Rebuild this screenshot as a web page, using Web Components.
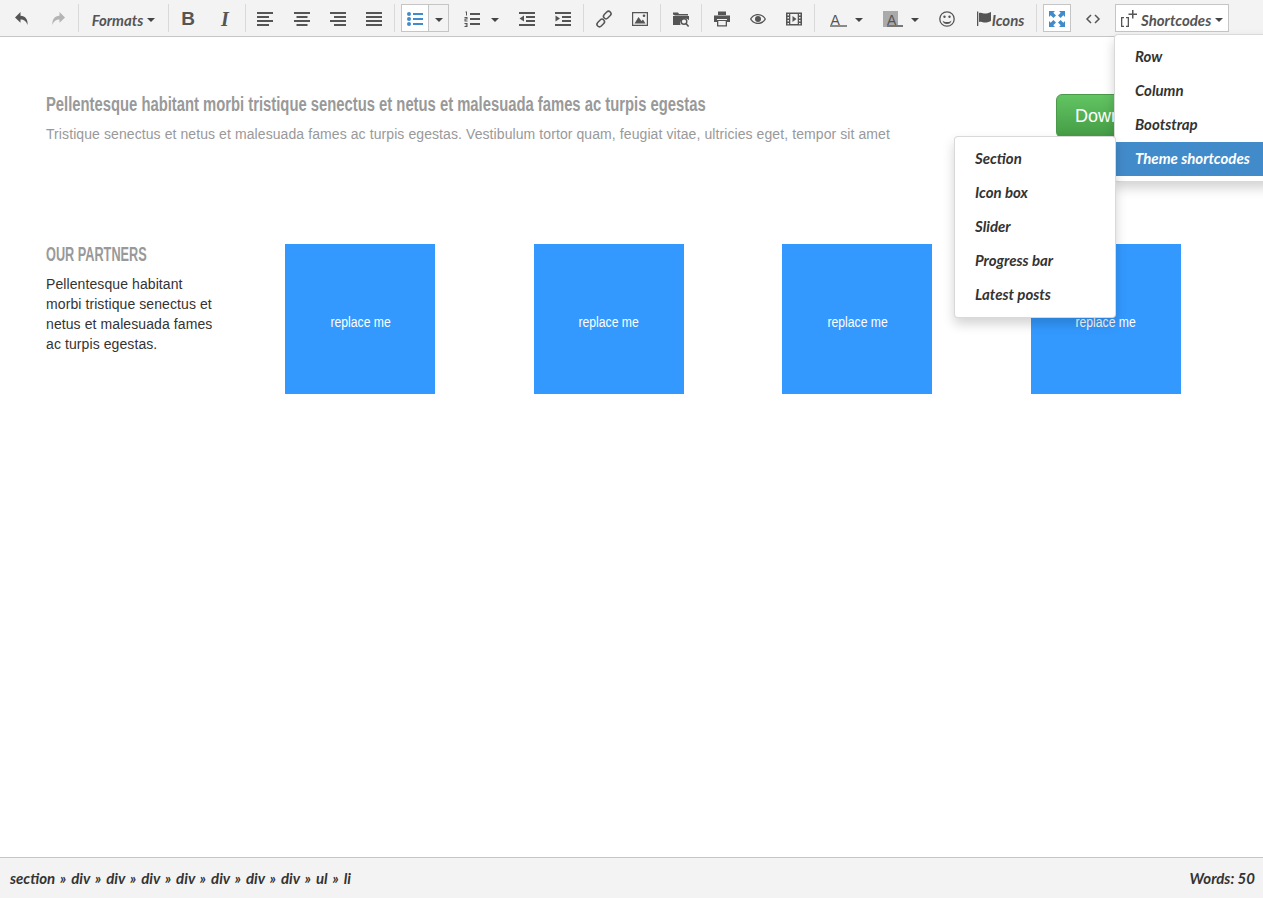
<!DOCTYPE html>
<html>
<head>
<meta charset="utf-8">
<title>Editor</title>
<style>
	html, body { margin: 0; height: 100%; background: #fff; overflow: hidden; }
	body { font-family: "Liberation Sans", Arial, sans-serif; }
	editor-shell { height: 898px; }
</style>
</head>
<body>
<template id="icons">
	<svg data-name="undo" viewBox="0 0 16 16"><path d="M6.500 1 1 6.500l5.500 5.200V8.500c3.500 0 5.500 1.300 7 5.500.6-5.500-2-9-7-9.300z"/></svg>
	<svg data-name="redo" viewBox="0 0 16 16"><path d="M9.500 1 15 6.500l-5.500 5.200V8.500c-3.500 0-5.500 1.300-7 5.500-.6-5.500 2-9 7-9.300z"/></svg>
	<svg data-name="left" viewBox="0 0 16 16"><path d="M0 1h16v2H0zM0 5h12v2H0zM0 9h16v2H0zM0 13h12v2H0z"/></svg>
	<svg data-name="center" viewBox="0 0 16 16"><path d="M0 1h16v2H0zM2.500 5h11v2h-11zM0 9h16v2H0zM2.500 13h11v2h-11z"/></svg>
	<svg data-name="right" viewBox="0 0 16 16"><path d="M0 1h16v2H0zM4 5h12v2H4zM0 9h16v2H0zM4 13h12v2H4z"/></svg>
	<svg data-name="justify" viewBox="0 0 16 16"><path d="M0 1h16v2H0zM0 5h16v2H0zM0 9h16v2H0zM0 13h16v2H0z"/></svg>
	<svg data-name="bullist" viewBox="0 0 16 16"><path d="M6 2h10v2H6zM6 7h10v2H6zM6 12h10v2H6z"/><circle cx="2" cy="3" r="2"/><circle cx="2" cy="8" r="2"/><circle cx="2" cy="13" r="2"/></svg>
	<svg data-name="numlist" viewBox="0 0 16 16"><path d="M6 2h10v2H6zM6 7h10v2H6zM6 12h10v2H6zM1.500 .5h1.500v4H2V1.500h-.5zM.5 6h3v2.500H1.500v1h2v1h-3V7.500h2V7h-2zM.5 12h3v4h-3v-1h2v-.5h-1v-1h1V13h-2z"/></svg>
	<svg data-name="outdent" viewBox="0 0 16 16"><path d="M0 1h16v2H0zM7 5h9v2H7zM7 9h9v2H7zM0 13h16v2H0zM5 4.500v6L.5 7.500z"/></svg>
	<svg data-name="indent" viewBox="0 0 16 16"><path d="M0 1h16v2H0zM7 5h9v2H7zM7 9h9v2H7zM0 13h16v2H0zM.5 4.500v6l4.500-3z"/></svg>
	<svg data-name="link" viewBox="0 0 16 16"><g fill="none" stroke="currentColor" stroke-width="1.500"><rect x="8.800" y="-.2" width="5" height="8.500" rx="2.500" transform="rotate(45 11.300 4)"/><rect x="2.200" y="7.700" width="5" height="8.500" rx="2.500" transform="rotate(45 4.700 12)"/></g></svg>
	<svg data-name="image" viewBox="0 0 16 16"><path fill-rule="evenodd" d="M0 1h16v14H0zM1.200 2.200v11.600h13.600V2.200z"/><path d="M2.500 12.500 6.500 6l3 4 1.500-1.500 2.500 4z"/><circle cx="12" cy="4.700" r="1.300"/></svg>
	<svg data-name="browse" viewBox="0 0 16 16"><path d="M0 3V1.500h5L6 3h9v1.500H1.500V4H.5zM0 5h16v4.200A5 5 0 0 0 7.500 14H0z"/><circle cx="11" cy="10.500" r="2.800" fill="#f3f3f3" stroke="currentColor" stroke-width="1.400"/><path d="m13 12.500 2.600 3" stroke="currentColor" stroke-width="1.600"/></svg>
	<svg data-name="print" viewBox="0 0 16 16"><path d="M4 .5h8V4H4zM0 4.500h16V11h-3V8H3v3H0z"/><path fill-rule="evenodd" d="M3 9h10v6.500H3zM4.300 10v4.300h7.400V10z"/></svg>
	<svg data-name="eye" viewBox="0 0 16 16"><path fill-rule="evenodd" d="M8 3C4 3 1.300 5.500 0 8c1.300 2.500 4 5 8 5s6.700-2.500 8-5c-1.300-2.500-4-5-8-5zM8 4.200c3 0 5.300 1.700 6.600 3.800-1.300 2.100-3.600 3.800-6.600 3.800S2.700 10.100 1.400 8C2.700 5.900 5 4.200 8 4.200z"/><circle cx="8" cy="8" r="3"/></svg>
	<svg data-name="media" viewBox="0 0 16 16"><path fill-rule="evenodd" d="M0 1.500h16v13H0zM1.500 3v1.500h1.500V3zM13 3v1.500h1.500V3zM1.500 6v1.500h1.500V6zM13 6v1.500h1.500V6zM1.500 9v1.500h1.500V9zM13 9v1.500h1.500V9zM1.500 12v1.300h1.500V12zM13 12v1.300h1.500V12zM4.300 3v10h7.400V3z"/><path d="M6.500 5v6L10.500 8z"/></svg>
	<svg data-name="smile" viewBox="0 0 16 16"><circle cx="8" cy="8" r="7.200" fill="none" stroke="currentColor" stroke-width="1.300"/><circle cx="5.500" cy="5.800" r="1.200"/><circle cx="10.500" cy="5.800" r="1.200"/><path d="M3.500 9.500c1 1 2.500 1.500 4.500 1.500s3.500-.5 4.500-1.500C12 12 10.500 13 8 13s-4-1-4.500-3.500z"/></svg>
	<svg data-name="flag" viewBox="0 0 16 16"><path d="M1 .5h1.300V15H1zM3 2c2.500-1 4 .5 6 .5 2 0 3-.5 6-1.500v9c-3 1-4 1.500-6 1.500S5.500 10 3 11z"/></svg>
	<svg data-name="fullscreen" viewBox="0 0 16 16"><path d="M0 0h6L4.300 1.700 7 4.400 4.400 7 1.700 4.300 0 6zM16 0v6l-1.700-1.700L11.600 7 9 4.400l2.700-2.700L10 0zM0 16v-6l1.700 1.700L4.400 9 7 11.600l-2.700 2.700L6 16zM16 16h-6l1.700-1.700L9 11.600 11.600 9l2.700 2.700L16 10z"/></svg>
	<svg data-name="code" viewBox="0 0 16 16"><path fill="none" stroke="currentColor" stroke-width="1.500" d="M6 4 2 8l4 4M10 4l4 4-4 4"/></svg>
	<svg data-name="shortcode" viewBox="0 0 16 16"><path d="M0 6h3v1.200H1.300v7.600H3V16H0zM8 6H5v1.200h1.700v7.600H5V16h3zM11 -1h1.500v3.500H16V4h-3.500v3.500H11V4H7.500V2.500H11z"/></svg>
</template>

<script>
const iconSource = document.getElementById('icons').content;

class TbButton extends HTMLElement {
	constructor() {
		super();
		this.attachShadow({ mode: 'open' });
		this.shadowRoot.innerHTML = `
			<style>
				:host { display: flex; align-items: center; justify-content: center; box-sizing: border-box;
					height: 28px; width: 36px; color: #555; flex: none; }
				:host([active]) { width: 28px; background: #fff; border: 1px solid #c5c5c5; color: #428bca; }
				:host([muted]) { color: #b4b4b4; }
				svg { width: 16px; height: 16px; fill: currentColor; display: block; flex: none; margin-top: 2px; overflow: visible; }
				.caret { border: 4px solid transparent; border-top-color: #444; border-bottom: 0; margin: 4px 0 0 4px; }
			</style>
			<slot></slot>`;
	}

	connectedCallback() {
		const name = this.getAttribute('icon');
		if (name) {
			const svg = iconSource.querySelector(`[data-name="${name}"]`).cloneNode(true);
			this.shadowRoot.insertBefore(svg, this.shadowRoot.querySelector('slot'));
		}
		if (this.hasAttribute('caret')) {
			const caret = document.createElement('span');
			caret.className = 'caret';
			this.shadowRoot.appendChild(caret);
		}
	}
}

class TbSep extends HTMLElement {
	constructor() {
		super();
		this.attachShadow({ mode: 'open' });
		this.shadowRoot.innerHTML = `
			<style>
				:host { display: block; width: 1px; height: 28px; background: #d9d9d9; flex: none; }
			</style>`;
	}
}

class EditorToolbar extends HTMLElement {
	constructor() {
		super();
		this.attachShadow({ mode: 'open' });
		this.shadowRoot.innerHTML = `
			<style>
				:host { display: flex; align-items: center; box-sizing: border-box; height: 37px; padding: 0 0 0 4px;
					background: #f3f3f3; border-bottom: 1px solid #c5c5c5; flex: none;
					font: italic bold 15px Lato, "Open Sans", sans-serif; color: #595959; }
				.b { font: bold 19px "Liberation Sans", sans-serif; padding-top: 2px; }
				.i { font: italic bold 20px "Liberation Serif", serif; padding-top: 2px; }
				.a { display: block; box-sizing: border-box; width: 17px; height: 16px; margin-top: 2px; padding-left: 1px;
					font: 14px/18px "Liberation Sans", sans-serif; color: #555;
					background: linear-gradient(#8a8a8a, #8a8a8a) no-repeat left bottom / 100% 2px; }
				.ab { width: 20px; padding-left: 4px;
					background: linear-gradient(#777, #777) no-repeat 4px bottom / 16px 2px,
						linear-gradient(#aaa, #aaa) no-repeat left top / 15px 100%; }
				.caret { border: 4px solid transparent; border-top-color: #444; border-bottom: 0; display: block; margin-top: 4px; }
				.split { display: flex; align-items: center; justify-content: center; width: 20px; height: 28px; box-sizing: border-box;
					border: 1px solid #c5c5c5; border-left: 0; background: #f3f3f3; flex: none; }
				.drop { display: flex; align-items: center; justify-content: center; flex: none; }
				.gap { flex: none; }
				.txt { line-height: 28px; padding-top: 3px; }
			</style>
			<tb-button icon="undo"></tb-button>
			<tb-button icon="redo" muted></tb-button>
			<span class="gap" style="width:2px"></span><tb-sep></tb-sep>
			<tb-button caret style="width:89px"><span class="txt">Formats</span></tb-button>
			<tb-sep></tb-sep><span class="gap" style="width:1px"></span>
			<tb-button><span class="b">B</span></tb-button>
			<span class="gap" style="width:1px"></span>
			<tb-button><span class="i">I</span></tb-button>
			<span class="gap" style="width:2px"></span><tb-sep></tb-sep><span class="gap" style="width:1px"></span>
			<tb-button icon="left"></tb-button>
			<span class="gap" style="width:1px"></span>
			<tb-button icon="center"></tb-button>
			<tb-button icon="right"></tb-button>
			<tb-button icon="justify"></tb-button>
			<span class="gap" style="width:2px"></span><tb-sep></tb-sep><span class="gap" style="width:6px"></span>
			<tb-button icon="bullist" active></tb-button>
			<span class="split"><span class="caret"></span></span>
			<span class="gap" style="width:5px"></span>
			<tb-button icon="numlist"></tb-button>
			<span class="drop" style="width:10px"><span class="caret"></span></span>
			<span class="gap" style="width:9px"></span>
			<tb-button icon="outdent"></tb-button>
			<tb-button icon="indent"></tb-button>
			<span class="gap" style="width:2px"></span><tb-sep></tb-sep><span class="gap" style="width:2px"></span>
			<tb-button icon="link"></tb-button>
			<tb-button icon="image"></tb-button>
			<span class="gap" style="width:2px"></span><tb-sep></tb-sep><span class="gap" style="width:2px"></span>
			<tb-button icon="browse"></tb-button>
			<span class="gap" style="width:2px"></span><tb-sep></tb-sep><span class="gap" style="width:2px"></span>
			<tb-button icon="print"></tb-button>
			<tb-button icon="eye"></tb-button>
			<tb-button icon="media"></tb-button>
			<span class="gap" style="width:2px"></span><tb-sep></tb-sep><span class="gap" style="width:6px"></span>
			<tb-button style="width:34px"><span class="a">A</span></tb-button>
			<span class="drop" style="width:8px"><span class="caret"></span></span>
			<span class="gap" style="width:12px"></span>
			<tb-button><span class="a ab">A</span></tb-button>
			<span class="drop" style="width:8px"><span class="caret"></span></span>
			<span class="gap" style="width:10px"></span>
			<tb-button icon="smile"></tb-button>
			<span class="gap" style="width:11px"></span>
			<tb-button icon="flag" style="width:48px"><span class="txt">Icons</span></tb-button>
			<span class="gap" style="width:12px"></span><tb-sep></tb-sep><span class="gap" style="width:6px"></span>
			<tb-button icon="fullscreen" active></tb-button>
			<span class="gap" style="width:4px"></span>
			<tb-button icon="code"></tb-button>
			<span class="gap" style="width:4px"></span>
			<tb-button icon="shortcode" active caret style="width:114px;color:#555;justify-content:flex-start;padding-left:5px"><span class="txt" style="margin-left:4px">Shortcodes</span></tb-button>`;
	}
}

class DropMenu extends HTMLElement {
	constructor() {
		super();
		this.attachShadow({ mode: 'open' });
		this.shadowRoot.innerHTML = `
			<style>
				:host { display: block; position: absolute; box-sizing: border-box; padding: 5px 0; background: #fff;
					border: 1px solid rgba(0,0,0,.15); border-radius: 4px; box-shadow: 0 6px 12px rgba(0,0,0,.175);
					font: italic bold 15px Lato, "Open Sans", sans-serif; color: #333; z-index: 5; }
			</style>
			<slot></slot>`;
	}
}

class MenuItem extends HTMLElement {
	constructor() {
		super();
		this.attachShadow({ mode: 'open' });
		this.shadowRoot.innerHTML = `
			<style>
				:host { display: block; height: 34px; line-height: 33px; padding-left: 20px; white-space: nowrap; }
				:host([selected]) { background: #428bca; color: #fff; }
			</style>
			<slot></slot>`;
	}
}

class CtaBlock extends HTMLElement {
	constructor() {
		super();
		this.attachShadow({ mode: 'open' });
		this.shadowRoot.innerHTML = `
			<style>
				:host { display: flex; justify-content: space-between; align-items: flex-start; padding: 57px 46px 0; }
				.copy { flex: 1; min-width: 0; margin-top: -1px; }
				h2 { margin: 0; font: bold 20px/22px "Liberation Sans", sans-serif; color: #999; white-space: nowrap;
					transform: scaleX(.74); transform-origin: left center; }
				p { margin: 9px 0 0; font-size: 14px; line-height: 20px; color: #999; letter-spacing: .087px; white-space: nowrap; }
				.btn { display: block; flex: none; box-sizing: border-box; width: 160px; height: 44px; padding: 0 18px; line-height: 42px;
					border: 1px solid #4a9a4a; border-radius: 6px; color: #fff; font-size: 18px;
					background: linear-gradient(#62c462, #459c45); white-space: nowrap; margin-right: 1px; }
			</style>
			<div class="copy">
				<h2><slot name="title"></slot></h2>
				<p><slot name="text"></slot></p>
			</div>
			<span class="btn">Download</span>`;
	}
}

class PartnerRow extends HTMLElement {
	constructor() {
		super();
		this.attachShadow({ mode: 'open' });
		this.shadowRoot.innerHTML = `
			<style>
				:host { display: grid; grid-template-columns: 190px repeat(4, 1fr); margin: 0 33px 0 46px; padding-top: 100px; }
				h3 { margin: 0; font: bold 20px/20px "Liberation Sans", sans-serif; color: #999; white-space: nowrap;
					transform: scaleX(.635); transform-origin: left center; }
				p { margin: 10px 0 0; width: 172px; font-size: 14px; line-height: 20px; color: #333; letter-spacing: .09px; }
			</style>
			<div>
				<h3>OUR PARTNERS</h3>
				<p><slot name="text"></slot></p>
			</div>
			<slot></slot>`;
	}
}

class PartnerTile extends HTMLElement {
	constructor() {
		super();
		this.attachShadow({ mode: 'open' });
		this.shadowRoot.innerHTML = `
			<style>
				:host { display: block; }
				div { display: flex; align-items: center; justify-content: center; width: 150px; height: 150px; margin: 0 auto;
					background: #39f; color: #fff; font: 14px "Liberation Sans", sans-serif; padding-top: 6px; box-sizing: border-box; }
				span { display: block; transform: scaleX(.87); white-space: nowrap; }
			</style>
			<div><span>replace me</span></div>`;
	}
}

class StatusBar extends HTMLElement {
	constructor() {
		super();
		this.attachShadow({ mode: 'open' });
		this.shadowRoot.innerHTML = `
			<style>
				:host { display: flex; justify-content: space-between; align-items: center; box-sizing: border-box; height: 41px;
					padding: 0 8px 0 10px; background: #f3f3f3; border-top: 1px solid #c5c5c5; flex: none;
					font: italic bold 15px Lato, "Open Sans", sans-serif; color: #333; }
				.path { word-spacing: 1.65px; }
			</style>
			<span class="path"><slot name="path"></slot></span>
			<span><slot name="count"></slot></span>`;
	}
}

class EditorShell extends HTMLElement {
	constructor() {
		super();
		this.attachShadow({ mode: 'open' });
		this.shadowRoot.innerHTML = `
			<style>
				:host { display: flex; flex-direction: column; position: relative; overflow: hidden; }
				main { flex: 1; min-height: 0; display: block; }
			</style>
			<editor-toolbar></editor-toolbar>
			<main><slot></slot></main>
			<slot name="status"></slot>
			<slot name="menus"></slot>`;
	}
}

customElements.define('tb-button', TbButton);
customElements.define('tb-sep', TbSep);
customElements.define('editor-toolbar', EditorToolbar);
customElements.define('drop-menu', DropMenu);
customElements.define('menu-item', MenuItem);
customElements.define('cta-block', CtaBlock);
customElements.define('partner-row', PartnerRow);
customElements.define('partner-tile', PartnerTile);
customElements.define('status-bar', StatusBar);
customElements.define('editor-shell', EditorShell);
</script>

<editor-shell>
	<cta-block>
		<span slot="title">Pellentesque habitant morbi tristique senectus et netus et malesuada fames ac turpis egestas</span>
		<span slot="text">Tristique senectus et netus et malesuada fames ac turpis egestas. Vestibulum tortor quam, feugiat vitae, ultricies eget, tempor sit amet</span>
	</cta-block>
	<partner-row>
		<span slot="text">Pellentesque habitant morbi tristique senectus et netus et malesuada fames ac turpis egestas.</span>
		<partner-tile></partner-tile>
		<partner-tile></partner-tile>
		<partner-tile></partner-tile>
		<partner-tile></partner-tile>
	</partner-row>
	<status-bar slot="status">
		<span slot="path">section » div » div » div » div » div » div » div » ul » li</span>
		<span slot="count">Words: 50</span>
	</status-bar>
	<drop-menu slot="menus" style="left:1114px;top:34px;width:160px;">
		<menu-item>Row</menu-item>
		<menu-item>Column</menu-item>
		<menu-item>Bootstrap</menu-item>
		<menu-item selected>Theme shortcodes</menu-item>
	</drop-menu>
	<drop-menu slot="menus" style="left:954px;top:136px;width:162px;">
		<menu-item>Section</menu-item>
		<menu-item>Icon box</menu-item>
		<menu-item>Slider</menu-item>
		<menu-item>Progress bar</menu-item>
		<menu-item>Latest posts</menu-item>
	</drop-menu>
</editor-shell>
</body>
</html>
